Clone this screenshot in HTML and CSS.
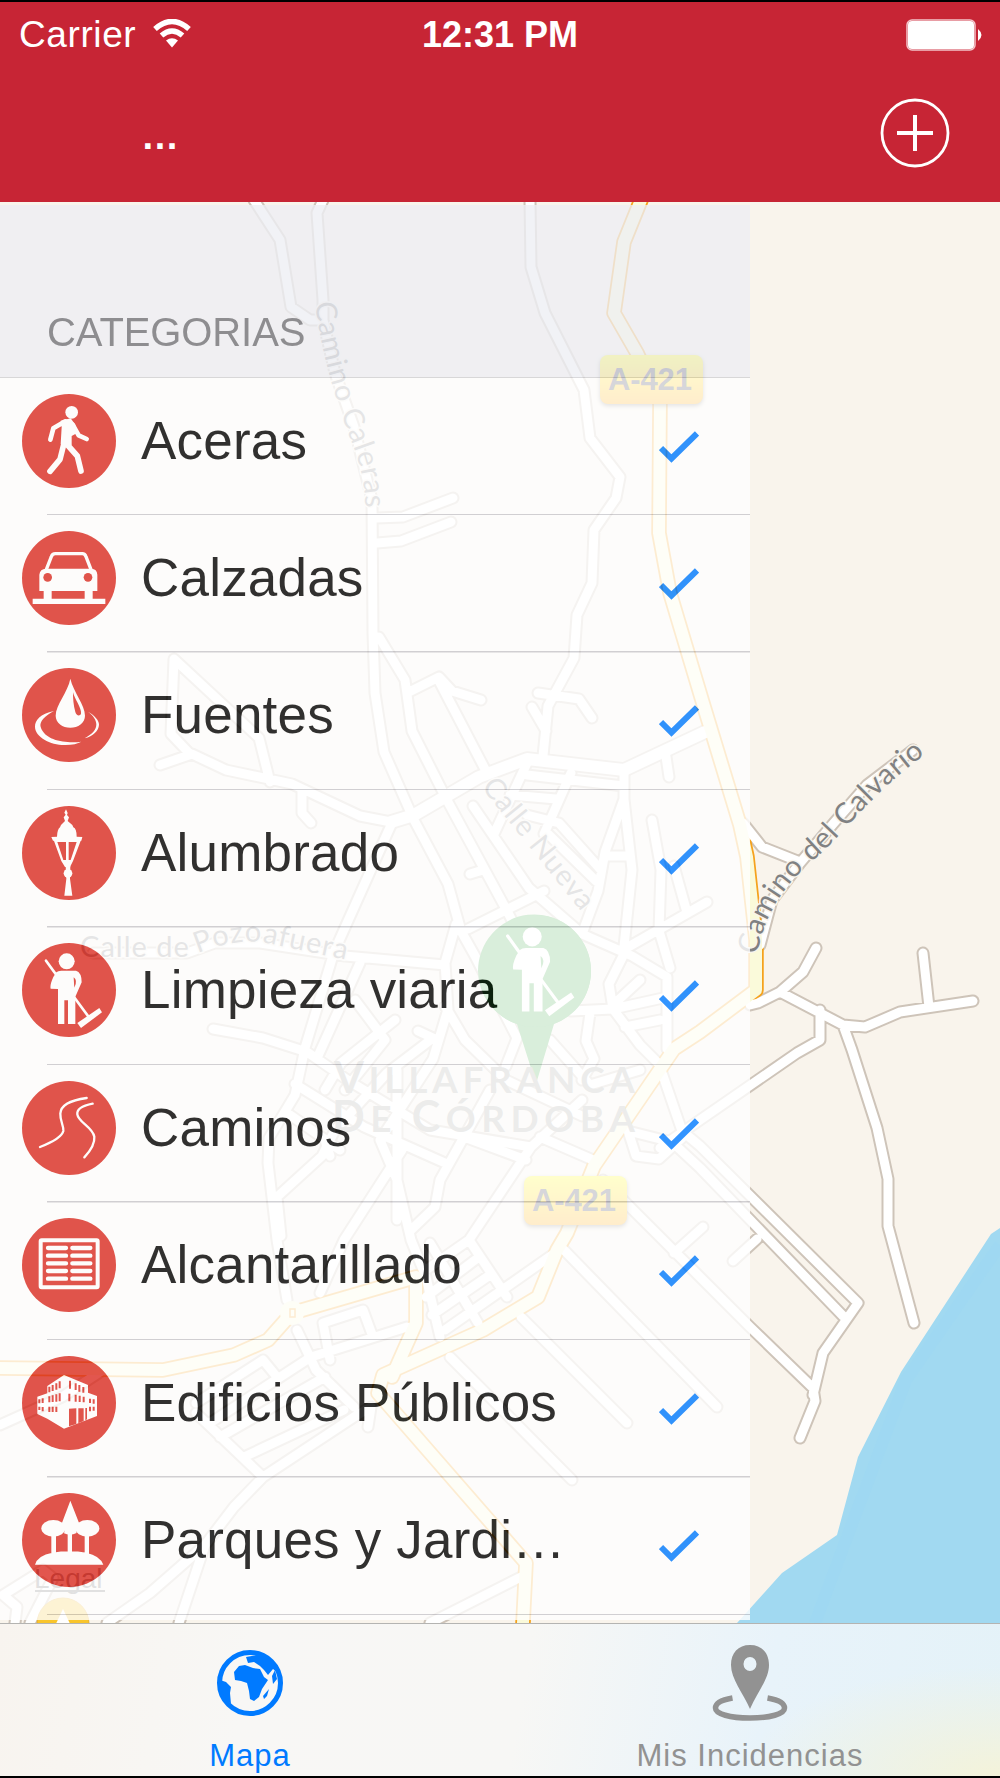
FILE: index.html
```
<!DOCTYPE html>
<html lang="es">
<head>
  <meta charset="UTF-8">
  <meta name="viewport" content="width=device-width, initial-scale=1.0">
  <title>Incidencias - Mapa</title>
  <link rel="stylesheet" href="styles.css">
</head>
<body>
  <div class="screen">
    <header class="navbar">
      <div class="status">
        <div class="carrier">
          <span>Carrier</span>
          <svg class="wifi" viewBox="0 0 38 29">
            <path d="M2 10 Q19 -5 36 10" />
            <path d="M8.500 16.500 Q19 7.500 29.500 16.500" />
            <path class="dot" d="M13 21.500 Q19 17 25 21.500 L19 28.500Z" />
          </svg>
        </div>
        <div class="time">12:31 PM</div>
        <svg class="battery" viewBox="0 0 77 32">
          <rect class="frame" x="1" y="1" width="68" height="30" rx="5" />
          <rect class="fill" x="2" y="2" width="66" height="28" rx="4" />
          <path class="fill" d="M72 10Q79 16 72 22Z" />
        </svg>
      </div>
      <div class="titlebar">
        <div class="title">…</div>
        <svg class="add" viewBox="0 0 70 70">
          <circle cx="35" cy="35" r="33" />
          <path d="M35 17V53M17 35H53" />
        </svg>
      </div>
    </header>

    <main class="content">
      <svg class="map" viewBox="0 202 1000 1421">
        <defs>
          <path id="streets" d="M254 200L280 240L291 307L310 320H323
            M323 200L317 213L323 300V320L335 373L354 427L372 500L373 633L375 693L384 752L414 820L448 884L461 931L475 956L517 1038L506 1066
            M377 518L403 517L453 498 M377 543L401 541L451 522
            M530 200L531 267L545 313L584 390L590 438L620 477L616 498L594 530L592 583L577 615L574 658L548 706L543 756
            M538 693L579 699L592 718 M532 707L546 731
            M379 637L405 680L412 731L448 802L506 909L517 930 M407 693L439 677L452 691L481 700 M439 681L487 773
            M171 734L174 659L259 738L270 782 M171 734L190 754 M160 765L192 754L226 770L292 784L360 816L391 822
            M302 791V813L311 823 M391 825L334 952L305 1048L295 1095L269 1138L268 1163L277 1240L287 1300
            M93 953H187L215 943L260 943L345 956L445 965 M213 1029L263 1038L307 1052L349 1081
            M510 795L556 799 M527 775L624 786 M527 763L494 834 M571 773L544 834 M527 815L559 823L601 870 M548 834L596 881
            M624 774V799L605 852L598 891L582 934L632 956L667 977V1049
            M624 799L632 870L623 956L609 984L613 1009L640 1045L659 1064 M605 856H628
            M652 820L661 870L659 931L670 968 M623 950L707 902 M674 866L686 909 M665 750L669 777
            M473 806L529 888L582 934 M468 929L544 891 M470 874L483 870
            M456 924L445 963L448 1009L433 1059 M445 1006L465 1040L506 1080L582 1116
            M571 1011L613 1009L663 998 M625 1027L660 1020 M640 980L613 1005 M590 1013L586 1041L594 1059L582 1080 M550 1040L590 1085L640 1070
            M395 1020L341 1063L325 1090 M360 963L318 1056 M355 1000L385 1040L345 1090 M418 1031L433 1038L387 1073L335 1130L322 1156L277 1197L281 1236
            M295 1084L364 1127L445 1163 M290 1115L340 1150 M330 1156L325 1140
            M349 1081L430 1130L531 1147 M433 1059L380 1140L397 1180L411 1240L426 1277L440 1337 M402 1150L344 1240L320 1293 M397 1070V1220
            M490 1090L464 1137L440 1180L435 1207L411 1230 M464 1137L526 1160 M582 1100L531 1147L469 1240L426 1270 M540 1137L593 1160
            M430 1243L478 1323 M469 1240L507 1297 M445 1330L555 1253 M426 1297L475 1260 M432 1315L490 1275
            M564 1250L717 1407 M521 1317L627 1423 M450 1357L572 1480 M603 1180L750 1327L813 1388
            M703 1227L674 1253 M659 1064L682 1131L700 1146L858 1303L823 1353L813 1395 M628 1131L672 1142L700 1168L843 1316
            M628 1131L636 1156L659 1159L682 1138 M757 1239L733 1261 M813 1388L815 1401L800 1438
            M820 1010V1040L797 1053L700 1120L660 1148
            M750 1005L758 1003L780 992L803 972L816 948 M780 992L843 1025L865 1027L900 1012L973 1001 M923 953L929 1007
            M843 1025L852 1050L877 1128L888 1179V1226L914 1323
            M743 823L762 847L800 862 M913 750L867 785L833 824L800 863L772 900L760 945
            M196 1413L263 1477L354 1417L371 1407L368 1427 M196 1403L263 1360L277 1377 M220 1437L325 1377 M244 1457L344 1410
            M297 1330L316 1370L354 1407 M210 1423L311 1357L407 1327 M330 1360L323 1323L363 1310L373 1337
            M263 1477L234 1507L205 1545L150 1593L107 1623 M205 1545L179 1623
            M15 1623L17 1607L3 1595L43 1570L53 1578L30 1623 M0 1425L62 1397L100 1372 M521 1577L430 1623" />
          <path id="avenue" d="M391 822L414 815L479 777L527 759L624 770L705 732" />
          <path id="highway" d="M641 200L624 242L614 313L637 353L660 403L659 533L670 593L702 700L740 825L747 857L756 940V990L700 1032L674 1049L594 1166L567 1233L557 1250L538 1297L483 1330L383 1375L378 1393L526 1563L523 1623
            M0 1368L163 1370L234 1355L268 1340L292 1313L416 1277V1323L392 1377" />
          <path id="calvario" d="M757 955C764 915 786 882 815 859C850 828 872 790 940 744" />
          <path id="caleras" d="M315 303C321 350 335 400 351 440S365 500 366 540" />
          <path id="nueva" d="M481 787L600 935" />
          <path id="pozoafuera" d="M80 957H190C215 945 240 940 262 942L370 965" />
          <linearGradient id="shield" x2="0" y2="1">
            <stop offset="0" stop-color="#ffff00" />
            <stop offset="1" stop-color="#ffa500" />
          </linearGradient>
        </defs>

        <rect class="land" y="201" width="1000" height="1422" />
        <path class="water" d="M1000 1228L991 1234L901 1372L858 1457L837 1535L782 1573L737 1623H1000Z" />
        <path class="current" d="M1000 1245L906 1380L846 1540L815 1623" />

        <use href="#streets" class="street-edge" />
        <use href="#avenue" class="avenue-edge" />
        <use href="#highway" class="highway-edge" />
        <use href="#streets" class="street" />
        <use href="#avenue" class="avenue" />
        <use href="#highway" class="highway" />
        <circle class="roundabout" cx="292" cy="1313" r="12" />
        <rect class="island" x="290" y="1309" width="5" height="8" />

        <text class="street-name" textLength="267"><textPath href="#calvario">Camino del Calvario</textPath></text>
        <text class="street-name" textLength="212"><textPath href="#caleras">Camino Caleras</textPath></text>
        <text class="street-name" textLength="160"><textPath href="#nueva">Calle Nueva</textPath></text>
        <text class="street-name" textLength="270"><textPath href="#pozoafuera">Calle de Pozoafuera</textPath></text>

        <g class="pin">
          <path d="M478 971A56.500 56.500 0 1 1 554 1024L536 1084L517 1024A56.500 56.500 0 0 1 478 971Z" />
          <use href="#i-limpieza" x="479" y="915" width="112" height="112" />
        </g>
        <text class="town" x="334" y="1093" textLength="301"><tspan class="big">V</tspan>ILLAFRANCA</text>
        <text class="town" x="332" y="1132" textLength="303"><tspan class="big">D</tspan>E <tspan class="big">C</tspan>ÓRDOBA</text>

        <g class="shield">
          <rect x="600" y="355" width="103" height="49" rx="8" />
          <text x="650" y="390" textLength="84">A-421</text>
          <rect x="524" y="1176" width="103" height="49" rx="8" />
          <text x="574" y="1211" textLength="84">A-421</text>
        </g>
        <circle class="poi" cx="63" cy="1624" r="26" />
        <path class="poi-mark" d="M63 1609L73 1630H53Z" />
        <text class="legal" x="34" y="1588">Legal</text>
        <path class="legal-line" d="M35 1591H105" />
      </svg>

      <aside class="drawer">
        <h2>CATEGORIAS</h2>
        <ul>
          <li><svg class="icon"><use href="#i-aceras" /></svg><span>Aceras</span><svg class="check"><use href="#i-check" /></svg></li>
          <li><svg class="icon"><use href="#i-calzadas" /></svg><span>Calzadas</span><svg class="check"><use href="#i-check" /></svg></li>
          <li><svg class="icon"><use href="#i-fuentes" /></svg><span>Fuentes</span><svg class="check"><use href="#i-check" /></svg></li>
          <li><svg class="icon"><use href="#i-alumbrado" /></svg><span>Alumbrado</span><svg class="check"><use href="#i-check" /></svg></li>
          <li><svg class="icon"><use href="#i-limpieza" /></svg><span>Limpieza viaria</span><svg class="check"><use href="#i-check" /></svg></li>
          <li><svg class="icon"><use href="#i-caminos" /></svg><span>Caminos</span><svg class="check"><use href="#i-check" /></svg></li>
          <li><svg class="icon"><use href="#i-alcantarillado" /></svg><span>Alcantarillado</span><svg class="check"><use href="#i-check" /></svg></li>
          <li><svg class="icon"><use href="#i-edificios" /></svg><span>Edificios Públicos</span><svg class="check"><use href="#i-check" /></svg></li>
          <li><svg class="icon"><use href="#i-parques" /></svg><span>Parques y Jardi…</span><svg class="check"><use href="#i-check" /></svg></li>
        </ul>
      </aside>
    </main>

    <nav class="tabbar">
      <a class="tab active">
        <svg viewBox="0 0 68 70">
          <circle class="ring" cx="34" cy="35" r="30.500" />
          <path d="M30 9L46 6Q58 12 62 25L57 21L52 27L48 22L44 18L38 14L32 15Z" />
          <path d="M18 24L23 18L29 17L37 20L44 21L48 29L52 32L46 41L43 49L38 53L34 51L33 43L31 35L25 33L19 32Z" />
          <path d="M4 32L10 34L15 39L14 45L15 56Q4 48 4 32Z" />
          <path d="M47 48L53 41L51 48L48 51ZM56 28L59 22L61 31L57 36Z" />
        </svg>
        <span>Mapa</span>
      </a>
      <a class="tab">
        <svg viewBox="0 0 76 76">
          <path fill-rule="evenodd" d="M38 0C26 0 19 8 19 20C19 34 31 48 38 64C45 48 57 34 57 20C57 8 50 0 38 0ZM38 12A6.500 7 0 1 1 38 26A6.500 7 0 1 1 38 12Z" />
          <path class="line" d="M20.500 53C9 55 3.500 58 3.500 63C3.500 69 18 73 38 73S72.500 69 72.500 63C72.500 58 67 55 55.500 53" />
        </svg>
        <span>Mis Incidencias</span>
      </a>
    </nav>
  </div>

  <!-- iconos -->
  <svg class="sprite">
    <symbol id="i-check" viewBox="0 0 40 32">
      <path fill="none" stroke="#007aff" stroke-width="6" d="M2 17L12.500 27.500L38 2.500" />
    </symbol>
    <symbol id="i-aceras" viewBox="0 0 282 282">
      <circle class="disc" cx="141" cy="141" r="141" />
      <circle cx="149" cy="55" r="19" />
      <path d="M116 80L146 73L160 92L164 118L149 126V153L132 158L116 150L119 100Z" />
      <path class="s14" d="M130 82L94 103L85 137M152 92L170 124L194 135" />
      <path class="s18" d="M126 148L114 196L84 232M134 150L166 186L177 231" />
    </symbol>
    <symbol id="i-calzadas" viewBox="0 0 282 282">
      <circle class="disc" cx="141" cy="141" r="141" />
      <path class="s10" d="M72 118L88 77Q91 68 100 68H181Q189 68 192 77L208 118" />
      <path d="M52 180V131Q54 113 72 113H208Q225 113 226 131V180ZM65 172H89V205H65ZM188 172H212V205H188ZM32 203H250V219H32Z" />
      <circle class="disc" cx="77" cy="139" r="13" />
      <circle class="disc" cx="198" cy="139" r="13" />
    </symbol>
    <symbol id="i-fuentes" viewBox="0 0 282 282">
      <circle class="disc" cx="141" cy="141" r="141" />
      <path d="M145 32C138 72 101 110 101 143C101 165 122 179 145 179S189 165 189 143C189 110 154 72 145 32Z" />
      <path class="disc" d="M153 73C157 92 180 121 177 137C174 145 163 144 160 132C154 111 153 92 153 73Z" />
      <path d="M96 129C54 138 39 157 39 176C39 207 87 232 130 231C151 231 167 227 178 221C140 226 70 222 56 177C51 161 69 143 96 129ZM198 131C219 143 231 157 231 170C230 189 213 204 188 211C213 197 223 185 223 169C223 156 214 143 198 131Z" />
    </symbol>
    <symbol id="i-alumbrado" viewBox="0 0 282 282">
      <circle class="disc" cx="141" cy="141" r="141" />
      <path d="M132 10L137 21L135 27L141 34L137 45L151 57L154 64Q164 68 164 92L181 93L178 104H93L88 93L105 92Q106 69 114 64L117 57L129 45L125 34L131 26L127 20Z" />
      <path fill-rule="evenodd" d="M95 102H177L153 165L144 183H129L118 165ZM106 108L124 162H132V108ZM140 108V162H146L164 108Z" />
      <circle cx="138" cy="202" r="13" />
      <path d="M131 180H145L144 218L151 269H127L133 218Z" />
    </symbol>
    <symbol id="i-limpieza" viewBox="0 0 282 282">
      <circle class="disc" cx="141" cy="141" r="141" />
      <circle cx="134" cy="55" r="24" />
      <path d="M103 88Q108 83 118 83H162Q179 88 179 118L160 161V243H138V172H127V243H108V138L86 137Q83 126 94 102Z" />
      <path class="disc" d="M155 103Q168 112 157 134Z" />
      <path class="s8" d="M72 53L106 100M156 162L198 219" />
      <path d="M166 240L232 195L240 208L177 255Z" />
    </symbol>
    <symbol id="i-caminos" viewBox="0 0 282 282">
      <circle class="disc" cx="141" cy="141" r="141" />
      <path class="s7" d="M194 51C150 57 116 72 115 98C114 121 126 135 124 150C120 168 82 187 54 198M212 68C181 74 164 84 166 100C169 124 211 137 217 167C219 188 204 211 187 229" />
    </symbol>
    <symbol id="i-alcantarillado" viewBox="0 0 282 282">
      <circle class="disc" cx="141" cy="141" r="141" />
      <rect class="s12" x="56" y="67" width="171" height="141" rx="3" />
      <path class="s13" d="M78 90H132M151 90H205M78 113H132M151 113H205M78 136H132M151 136H205M78 159H132M151 159H205M78 182H132M151 182H205" />
    </symbol>
    <symbol id="i-edificios" viewBox="0 0 282 282">
      <circle class="disc" cx="141" cy="141" r="141" />
      <path d="M126 57L198 87V110L225 120V180L126 218L76 188L46 174V122L76 112V90Z" />
      <path class="windows" d="M82 92V109M92 87V105M103 82V101M113 76V97M144 74V98M161 82V102M172 87V107M184 93V110" />
      <path class="windows" d="M52 130V142M62 127V141M82 121V139M92 118V138M103 115V137M113 112V136M142 113V136M161 116V137M173 119V138M185 122V139M204 128V141M215 130V143" />
      <path class="windows" d="M52 152V162M62 153V166M82 152V168M92 152V168M103 152V168M204 152V166M215 152V164" />
      <path class="disc" d="M141 158L163 157V204L141 211ZM169 157H185V195L169 202ZM190 156H195V190L190 193Z" />
    </symbol>
    <symbol id="i-parques" viewBox="0 0 282 282">
      <circle class="disc" cx="141" cy="141" r="141" />
      <path d="M145 23L172 92Q158 106 164 120Q144 130 126 121Q132 103 119 92Z" />
      <ellipse cx="94" cy="106" rx="36" ry="25" />
      <ellipse cx="196" cy="106" rx="36" ry="25" />
      <path d="M88 125H102V185H88ZM137 115H150V185H137ZM188 125H201V185H188ZM39 215Q47 187 91 179Q143 171 193 179Q234 188 244 215Z" />
    </symbol>
  </svg>
</body>
</html>
```
FILE: styles.css
```
* { margin: 0; padding: 0; box-sizing: border-box; }
body {
  background: #000;
  font-family: "Liberation Sans", Arial, sans-serif;
}
.screen {
  display: flex;
  flex-direction: column;
  width: 1000px;
  height: 1778px;
  padding: 2px 0;
  overflow: hidden;
}
.sprite {
  position: absolute;
  width: 0;
  height: 0;
}

/* barra superior */
.navbar {
  flex: none;
  height: 200px;
  background: #c72535;
  color: #fff;
}
.status {
  display: flex;
  align-items: center;
  justify-content: space-between;
  height: 65px;
  padding: 0 17px 0 19px;
}
.carrier {
  display: flex;
  align-items: center;
  gap: 17px;
  width: 280px;
  font-size: 37px;
  letter-spacing: 0.6px;
}
.wifi {
  width: 38px;
  height: 29px;
  margin-top: -3px;
}
.wifi path { fill: none; stroke: #fff; stroke-width: 5.5; }
.wifi .dot { fill: #fff; stroke: none; }
.time {
  margin-left: -2px;
  font-size: 36px;
  font-weight: bold;
}
.battery {
  width: 77px;
  height: 32px;
  margin-left: 203px;
}
.battery .frame { fill: none; stroke: #f3c5ca; stroke-width: 1.5; }
.battery .fill { fill: #fff; }
.titlebar {
  display: flex;
  align-items: flex-start;
  justify-content: space-between;
  padding: 31px 50px 0 141px;
}
.title {
  margin-top: 16px;
  font-size: 38px;
  font-weight: bold;
  line-height: 44px;
}
.add {
  width: 70px;
  height: 70px;
}
.add circle, .add path { fill: none; stroke: #fff; stroke-width: 2.8; }
.add path { stroke-width: 4; }

/* mapa */
.content {
  position: relative;
  flex: none;
  height: 1421px;
  overflow: hidden;
}
.map {
  position: absolute;
  top: 0;
  left: 0;
  width: 1000px;
  height: 1421px;
}
.land { fill: #f9f4ec; }
.water { fill: #a1d9f1; }
.current { fill: none; stroke: #9fd8f2; stroke-width: 12; }
.street-edge, .street, .avenue-edge, .avenue, .highway-edge, .highway {
  fill: none;
  stroke-linecap: round;
  stroke-linejoin: round;
}
.street-edge { stroke: #cec4b9; stroke-width: 13; }
.street { stroke: #fff; stroke-width: 9; }
.avenue-edge { stroke: #cec4b9; stroke-width: 15.5; }
.avenue { stroke: #fff; stroke-width: 12; }
.highway-edge { stroke: #f5a21d; stroke-width: 15.5; }
.highway { stroke: #fafada; stroke-width: 12; }
.roundabout { fill: #fafada; }
.island { fill: none; stroke: #f5a21d; stroke-width: 1.5; }
.street-name {
  fill: #808182;
  stroke: #f8f4ec;
  stroke-width: 3px;
  paint-order: stroke;
  font: 29px Lato, sans-serif;
}
.pin { fill: #41aa4b; --disc: #41aa4b; }
.town {
  fill: #a2a29f;
  font: bold 37px Lato, sans-serif;
}
.town .big { font-size: 43px; }
.shield rect {
  fill: url(#shield);
  filter: drop-shadow(0 2px 2px rgba(0, 0, 0, 0.5));
}
.shield text {
  fill: #323246;
  font-size: 31px;
  font-weight: bold;
  text-anchor: middle;
}
.poi { fill: #f9c52c; stroke: #eab02a; }
.poi-mark { fill: #fff; }
.legal { fill: #6b6b6b; font-size: 28px; }
.legal-line { stroke: #6b6b6b; stroke-width: 2; }

/* menu lateral */
.drawer {
  position: relative;
  width: 750px;
  height: 1415px;
  margin-top: 3px;
  background: #fff;
  opacity: 0.8;
  overflow: hidden;
}
.drawer h2 {
  height: 173px;
  padding: 104px 0 0 47px;
  background: #eeeff4;
  border-bottom: 1.5px solid #d0d0d4;
  color: #74747a;
  font-size: 40px;
  font-weight: normal;
  line-height: 46px;
  letter-spacing: -0.1px;
}
.drawer ul { list-style: none; }
.drawer li {
  display: flex;
  align-items: flex-start;
  height: 137.46px;
  padding: 15.5px 51px 0 22px;
  background: linear-gradient(#c8c7cc, #c8c7cc) 47px 100% / 703px 1.5px no-repeat;
}
.drawer li span {
  flex: 1;
  margin-left: 25px;
  color: #000;
  font-size: 53px;
  line-height: 94px;
  letter-spacing: 0.2px;
  white-space: nowrap;
}
.icon {
  width: 94px;
  height: 94px;
}
.check {
  width: 40px;
  height: 32px;
  margin-top: 37px;
}
symbol { fill: #fff; }
.disc { fill: var(--disc, #db2d23); }
.s7, .s8, .s10, .s12, .s13, .s14, .s18 {
  fill: none;
  stroke: #fff;
  stroke-linecap: round;
  stroke-linejoin: round;
}
.s7 { stroke-width: 7; }
.s8 { stroke-width: 8; }
.s10 { stroke-width: 10; }
.s12 { stroke-width: 12; }
.s13 { stroke-width: 13; }
.s14 { stroke-width: 14; }
.s18 { stroke-width: 17; }
.windows { fill: none; stroke: #db2d23; stroke-width: 6; }

/* pestañas */
.tabbar {
  display: flex;
  flex: none;
  height: 153px;
  border-top: 1.5px solid #b4b4b2;
  background:
    radial-gradient(ellipse 260px 110px at 100% 100%, #f4f3da, rgba(244, 243, 218, 0)),
    linear-gradient(100deg, #f8f4ef 0%, #f8f7f5 25%, #f7f7f5 52%, #e8f3fa 76%, #e4f2f8 100%);
}
.tab {
  display: flex;
  flex: 1;
  flex-direction: column;
  align-items: center;
  color: #929292;
  font-size: 31px;
  line-height: 36px;
  letter-spacing: 1px;
}
.tab svg {
  width: 76px;
  height: 76px;
  margin: 21px 0 17px;
  fill: #929292;
}
.tab .line { fill: none; stroke: #929292; stroke-width: 5.5; }
.tab.active { color: #007aff; }
.tab.active svg {
  width: 68px;
  height: 70px;
  margin: 24px 0 20px;
  fill: #007aff;
}
.tab.active .ring { fill: none; stroke: #007aff; stroke-width: 5; }
```
